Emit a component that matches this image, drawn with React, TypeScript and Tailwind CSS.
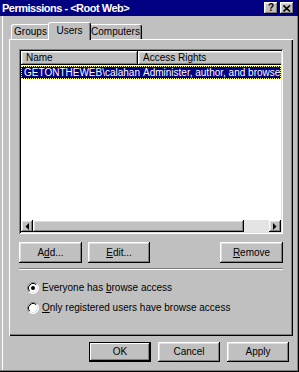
import React from "react";

const raised =
  "shadow-[inset_-1px_-1px_0_#000,inset_1px_1px_0_#fff,inset_-2px_-2px_0_#808080,inset_2px_2px_0_#dfdfdf]";
const raisedDefault =
  "shadow-[inset_0_0_0_1px_#000,inset_-2px_-2px_0_#000,inset_2px_2px_0_#fff,inset_-3px_-3px_0_#808080]";

function Btn({
  children,
  w,
  def,
}: {
  children: React.ReactNode;
  w: string;
  def?: boolean;
}) {
  return (
    <div
      className={`${w} h-full bg-[#c0c0c0] flex items-center justify-center ${
        def ? raisedDefault : raised
      }`}
    >
      {children}
    </div>
  );
}

function Radio({ checked }: { checked?: boolean }) {
  return (
    <svg width="12" height="12" viewBox="0 0 12 12" className="shrink-0">
      <circle cx="6" cy="6" r="5.5" fill="#fff" />
      <path d="M2.11 9.89 A5.5 5.5 0 0 1 9.89 2.11" stroke="#808080" strokeWidth="1" fill="none" />
      <path d="M9.89 2.11 A5.5 5.5 0 0 1 2.11 9.89" stroke="#fff" strokeWidth="1" fill="none" />
      <path d="M2.82 9.18 A4.5 4.5 0 0 1 9.18 2.82" stroke="#000" strokeWidth="1" fill="none" />
      <path d="M9.18 2.82 A4.5 4.5 0 0 1 2.82 9.18" stroke="#dfdfdf" strokeWidth="1" fill="none" />
      {checked && <circle cx="6" cy="6" r="2" fill="#000" />}
    </svg>
  );
}

function Tab({
  label,
  w,
  selected,
}: {
  label: string;
  w: string;
  selected?: boolean;
}) {
  return (
    <div
      className={`${w} ${
        selected ? "h-[18px] -mx-[2px] z-10 -mb-[1px] pb-[2px]" : "h-[15px]"
      } relative shrink-0 bg-[#c0c0c0] border-t border-l border-r border-t-white border-l-white border-r-black rounded-tl-[3px] rounded-tr-[3px] shadow-[inset_-1px_0_0_#808080] flex items-center justify-center whitespace-nowrap`}
    >
      {label}
    </div>
  );
}

export default function App() {
  return (
    <div
      className="w-[299px] h-[372px] bg-[#c0c0c0] flex flex-col text-black text-[10px] leading-none shadow-[inset_-1px_-1px_0_#000,inset_-2px_-2px_0_#808080,inset_2px_0_0_#c0c0c0,inset_3px_0_0_#fff]"
      style={{ fontFamily: '"Liberation Sans", Arial, sans-serif' }}
    >
      {/* Title bar */}
      <div className="h-[16px] bg-[#000080] flex items-center pl-[2px] pr-[4px] mr-[1px]">
        <span className="text-white font-bold text-[11px] tracking-[-0.5px]">
          Permissions - &lt;Root Web&gt;
        </span>
        <div className="ml-auto flex gap-[2px]">
          <div
            className={`w-[14px] h-[12px] bg-[#c0c0c0] ${raised} flex items-center justify-center font-bold text-[10px]`}
          >
            ?
          </div>
          <div
            className={`w-[14px] h-[12px] bg-[#c0c0c0] ${raised} flex items-center justify-center`}
          >
            <svg width="8" height="7" viewBox="0 0 8 7">
              <path d="M0.5 0.5 L7 6.5 M7 0.5 L0.5 6.5" stroke="#000" strokeWidth="1.6" />
            </svg>
          </div>
        </div>
      </div>

      {/* Tabs */}
      <div className="mt-[6px] ml-[11px] h-[17px] flex items-end">
        <Tab label="Groups" w="w-[39px]" />
        <Tab label="Users" w="w-[43px]" selected />
        <Tab label="Computers" w="w-[53px]" />
      </div>

      {/* Tab panel */}
      <div className="ml-[9px] w-[284px] h-[297px] flex flex-col px-[10px] pt-[10px] shadow-[inset_1px_1px_0_#fff,inset_-1px_-1px_0_#000,inset_-2px_-2px_0_#808080]">
        {/* List view */}
        <div className="w-[264px] h-[185px] bg-white p-[2px] flex flex-col shadow-[inset_1px_1px_0_#808080,inset_-1px_-1px_0_#fff,inset_2px_2px_0_#000,inset_-2px_-2px_0_#dfdfdf] overflow-hidden">
          <div className="h-[14px] flex shrink-0 overflow-hidden">
            <div className={`w-[117px] shrink-0 h-full bg-[#c0c0c0] ${raised} flex items-center pl-[5px]`}>
              Name
            </div>
            <div className={`w-[160px] shrink-0 h-full bg-[#c0c0c0] ${raised} flex items-center pl-[5px]`}>
              Access Rights
            </div>
          </div>
          <div className="flex-1 pt-[1px]">
            <div className="h-[13px] bg-[#000080] text-white flex items-center outline outline-1 outline-dotted outline-[#ffff80] -outline-offset-1 whitespace-nowrap overflow-hidden">
              <span className="w-[118px] shrink-0 pl-[3px]">GETONTHEWEB\calahan</span>
              <span className="pl-[4px]">Administer, author, and browse</span>
            </div>
          </div>
          <div className="h-[12px] flex shrink-0 bg-[#e4e4e4]">
            <div className={`w-[12px] h-full bg-[#c0c0c0] ${raised} flex items-center justify-center`}>
              <svg width="4" height="7" viewBox="0 0 4 7">
                <path d="M4 0 L0.5 3.5 L4 7 Z" fill="#000" />
              </svg>
            </div>
            <div className={`w-[211px] h-full bg-[#c0c0c0] ${raised}`} />
            <div className="flex-1" />
            <div className={`w-[12px] h-full bg-[#c0c0c0] ${raised} flex items-center justify-center`}>
              <svg width="4" height="7" viewBox="0 0 4 7">
                <path d="M0 0 L3.5 3.5 L0 7 Z" fill="#000" />
              </svg>
            </div>
          </div>
        </div>

        {/* Buttons */}
        <div className="mt-[8px] h-[21px] flex">
          <Btn w="w-[63px]">
            <span>
              A<u>d</u>d...
            </span>
          </Btn>
          <div className="w-[6px]" />
          <Btn w="w-[62px]">
            <span>
              <u>E</u>dit...
            </span>
          </Btn>
          <div className="flex-1" />
          <Btn w="w-[63px]">
            <span>
              <u>R</u>emove
            </span>
          </Btn>
        </div>

        {/* Separator */}
        <div className="mt-[5px] h-[2px] border-t border-t-[#808080] border-b border-b-white" />

        {/* Radios */}
        <div className="mt-[12px] flex items-center pl-[8px] h-[12px]">
          <Radio checked />
          <span className="ml-[3px]">
            Everyone has <u>b</u>rowse access
          </span>
        </div>
        <div className="mt-[8px] flex items-center pl-[8px] h-[12px]">
          <Radio />
          <span className="ml-[3px]">
            <u>O</u>nly registered users have browse access
          </span>
        </div>
      </div>

      {/* Bottom buttons */}
      <div className="mt-[6px] h-[20px] flex pl-[89px]">
        <Btn w="w-[62px]" def>
          OK
        </Btn>
        <div className="w-[7px]" />
        <Btn w="w-[62px]">Cancel</Btn>
        <div className="w-[7px]" />
        <Btn w="w-[62px]">Apply</Btn>
      </div>
    </div>
  );
}
